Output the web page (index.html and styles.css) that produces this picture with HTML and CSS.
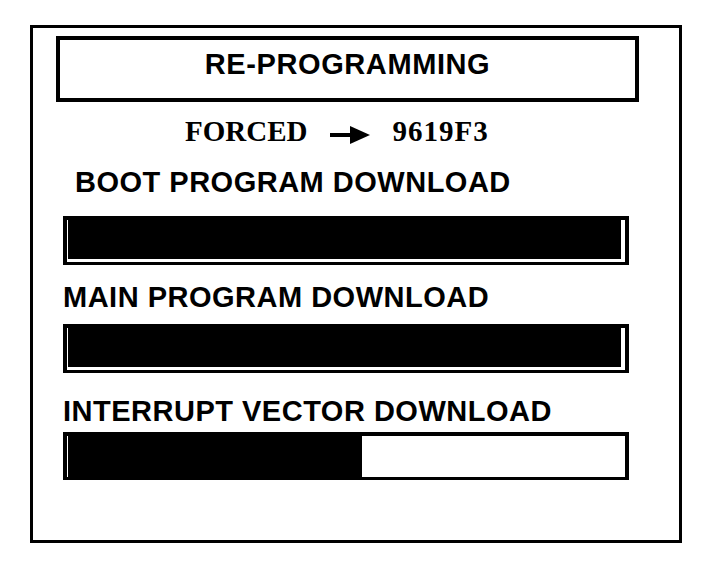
FILE: index.html
```html
<!doctype html>
<html lang="en">
<head>
    <meta charset="UTF-8">
    <title>Re-Programming</title>
    <link rel="stylesheet" href="styles.css">
</head>
<body>
<div class="frame">
    <div class="title">RE-PROGRAMMING</div>
    <div class="forced">
        <span class="mode">FORCED</span>
        <svg class="arrow" width="40" height="20" viewBox="0 0 40 20">
            <rect x="0" y="8" width="21" height="4" fill="#000"/>
            <polygon points="20,1 40,10 20,19" fill="#000"/>
        </svg>
        <span class="code">9619F3</span>
    </div>
    <div class="label label-boot">BOOT PROGRAM DOWNLOAD</div>
    <div class="bar bar-boot">
        <div class="fill full"></div>
    </div>
    <div class="label label-main">MAIN PROGRAM DOWNLOAD</div>
    <div class="bar bar-main">
        <div class="fill full"></div>
    </div>
    <div class="label label-vector">INTERRUPT VECTOR DOWNLOAD</div>
    <div class="bar bar-vector">
        <div class="fill" style="width: 52.7%"></div>
    </div>
</div>
</body>
</html>
```

FILE: styles.css
```css
body {
    margin: 0;
    background-color: #ffffff;
    color: #000000;
    font-family: "Liberation Sans", Arial, sans-serif;
}

.frame {
    box-sizing: border-box;
    margin: 25px 0 0 30px;
    width: 652px;
    height: 518px;
    border: 3px solid #000;
    padding: 8px 0 0 23px;
}

.title {
    box-sizing: border-box;
    width: 583px;
    height: 66px;
    border: 4px solid #000;
    padding-top: 8px;
    text-align: center;
    font-size: 29px;
    font-weight: bold;
    line-height: 32px;
    letter-spacing: 0.6px;
}

/* Forced line */
.forced {
    display: flex;
    align-items: flex-start;
    margin: 13px 0 0 129px;
    font-family: "Liberation Serif", "Times New Roman", serif;
    font-size: 29px;
    font-weight: bold;
    line-height: 32px;
    white-space: nowrap;
}

.forced .arrow {
    margin: 10px 22px 0 23px;
}

.forced .code {
    letter-spacing: 1px;
}

/* Labels */
.label {
    font-size: 29px;
    font-weight: bold;
    line-height: 32px;
    letter-spacing: 0.5px;
    white-space: nowrap;
}

.label-boot {
    margin: 19px 0 0 19px;
}

.label-main {
    margin: 16px 0 0 7px;
}

.label-vector {
    margin: 22px 0 0 7px;
}

/* Progress bars */
.bar {
    box-sizing: border-box;
    display: flex;
    width: 566px;
    height: 49px;
    margin-left: 7px;
    border: solid #000;
    border-width: 4px 4px 3px 4px;
    padding-left: 1px;
    background-color: #ffffff;
}

.bar-boot {
    margin-top: 18px;
}

.bar-main {
    margin-top: 11px;
}

.bar-vector {
    margin-top: 5px;
    height: 48px;
}

.fill {
    background-color: #000;
}

.fill.full {
    flex: 1;
    margin: 0 4px 3px 0;
}
```
